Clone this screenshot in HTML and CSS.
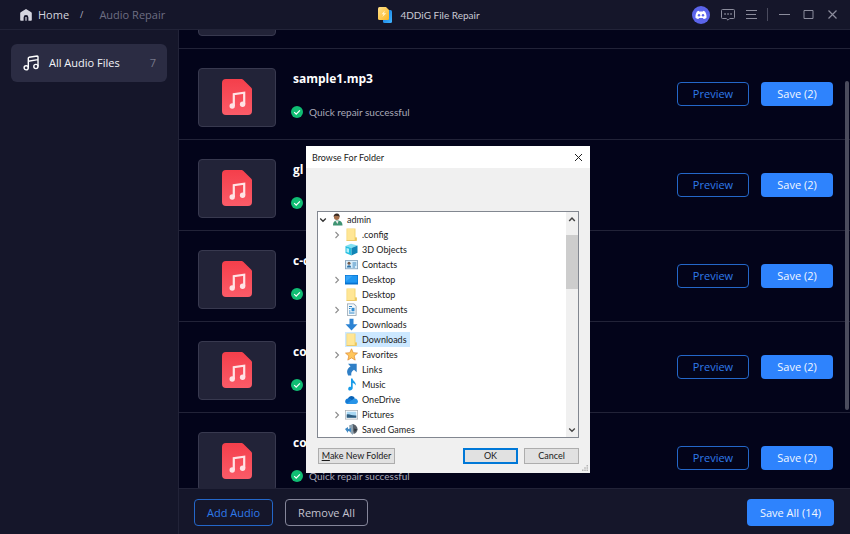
FILE: index.html
```html
<!DOCTYPE html>
<html lang="en">
<head>
<meta charset="utf-8">
<title>4DDiG File Repair</title>
<link rel="stylesheet" href="styles.css">
</head>
<body>
<svg class="sprite" aria-hidden="true">
  <defs>
    <linearGradient id="red" x1="0" y1="0" x2="0" y2="1"><stop offset="0" stop-color="#f43f4b"/><stop offset="1" stop-color="#fb5b68"/></linearGradient>
    <linearGradient id="gold" x1="0" y1="0" x2="1" y2="1"><stop offset="0" stop-color="#ffe08a"/><stop offset="1" stop-color="#fbb723"/></linearGradient>
    <linearGradient id="sky" x1="0" y1="0" x2="1" y2="1"><stop offset="0" stop-color="#0b6fd8"/><stop offset="1" stop-color="#41b5ff"/></linearGradient>
  </defs>
  <symbol id="audio-file" viewBox="0 0 30 36">
    <path fill="url(#red)" d="M4 0h15.500q1 0 1.700.7l8.100 8.100q.7.700.7 1.700V32a4 4 0 0 1-4 4H4a4 4 0 0 1-4-4V4a4 4 0 0 1 4-4z"/>
    <path fill="none" stroke="#ffe3e5" stroke-width="2.200" d="M11.800 27V15.200L22.200 13.700V25"/>
    <circle cx="10.200" cy="27" r="2.700" fill="#ffe3e5"/><circle cx="20.600" cy="25.300" r="2.700" fill="#ffe3e5"/>
  </symbol>
  <symbol id="check" viewBox="0 0 12 12"><circle cx="6" cy="6" r="6" fill="#10bd73"/><path d="M3.200 6.200l2 2 3.700-3.900" fill="none" stroke="#fff" stroke-width="1.200"/></symbol>
  <symbol id="chevron" viewBox="0 0 8 8"><path d="M2.500 1L5.500 4 2.500 7" fill="none" stroke="currentColor" stroke-width="1.100"/></symbol>
  <symbol id="chevron-down" viewBox="0 0 8 8"><path d="M1.200 2.500L4 5.300 6.800 2.500" fill="none" stroke="currentColor" stroke-width="1.300"/></symbol>
  <symbol id="chevron-up" viewBox="0 0 8 8"><path d="M1.200 6L4 3 6.800 6" fill="none" stroke="currentColor" stroke-width="1.500"/></symbol>
  <symbol id="folder" viewBox="0 0 13 13"><path fill="#f4d573" d="M1.500.5h9v9h1.200v3.300H1.500z"/><path fill="#ffe695" d="M2.200 1h7.300v11H2.200z"/><path fill="#e9c35b" d="M10.200 9.500h1.500v3.300H1.500V12h8.700z"/></symbol>
  <symbol id="user" viewBox="0 0 13 13"><path fill="#3f9473" d="M2 12.500c0-4 2-5 4.500-5s5 1 5 5z"/><path fill="#e8e8e8" d="M4.500 8l2 3 1-3z"/><circle cx="5.700" cy="4.300" r="2.700" fill="#a56f4a"/><path fill="#3a2a22" d="M2.700 4C2.300 1.500 4 .3 6 .4s3 1.600 2.500 3.900L7.500 3 4 2.800z"/></symbol>
  <symbol id="cube" viewBox="0 0 13 13"><path fill="#7fe0f3" d="M.5 3L6 .7l6.500 1.800L6.500 5z"/><path fill="#25bfe0" d="M.5 3l6 2v7.500l-6-2.500z"/><path fill="#1185b6" d="M6.500 5l6-2.500v7.300l-6 2.700z"/><path fill="#b4f0fa" d="M1.500 5l2.500.8v4L1.500 9z"/></symbol>
  <symbol id="contact" viewBox="0 0 13 13"><path fill="#7f9fba" d="M0 2.200h13v9H0z"/><path fill="#d9eefb" d="M.8 3h11.400v7.400H.8z"/><circle cx="4" cy="5.300" r="1.500" fill="#775a48"/><path fill="#2b6fa6" d="M1.800 9.600c0-3.300 4.400-3.300 4.400 0z"/><path stroke="#3c86bd" d="M7.500 5h3.800M7.500 7h3.800M7.500 9h2.500"/></symbol>
  <symbol id="desktop" viewBox="0 0 13 13"><path fill="#0872cf" d="M0 2h13v9.500H0z"/><path fill="#1e97f2" d="M.7 2.700h11.600v7H.7z"/><path fill="#38a5f8" d="M.7 2.700h7l-7 6z"/></symbol>
  <symbol id="document" viewBox="0 0 13 13"><path fill="#8d9daa" d="M2 .5h7l2.500 2.500v9.700H2z"/><path fill="#f5fafd" d="M2.700 1.200h6l2 2V12h-8z"/><path stroke="#2d86c9" d="M4 3.500h3M4 5.500h1.500M4 8h1.500M4 10h5.500"/><path fill="#2f8bd0" d="M6.500 4.800h3v3.500h-3z"/></symbol>
  <symbol id="download" viewBox="0 0 13 13"><path fill="#2c83d3" d="M4.500.7h4v5.500h4L6.500 12.500.5 6.200h4z"/></symbol>
  <symbol id="star" viewBox="0 0 13 13"><path fill="#ffc65b" stroke="#dc8a32" stroke-width=".7" d="M6.500.8l1.700 3.900 4.300.4-3.300 2.800 1 4.200-3.700-2.200-3.700 2.200 1-4.200L.5 5.100l4.300-.4z"/></symbol>
  <symbol id="link" viewBox="0 0 13 13"><path fill="#2f7fc6" d="M3 .8h8.700v8.500L9 6.800C6.500 8.200 6 10 6.300 12.500H3.200C1.200 9 2 5.600 5.500 3.600z"/></symbol>
  <symbol id="note" viewBox="0 0 13 13"><path fill="#179be8" d="M6 .5h1.500c.2 2.700 3.800 3 3.200 7-.8-1.700-1.700-2.200-3-2.500v5c0 2.800-4.500 3.400-4.500.9C3.200 9 5 8.600 6 9z"/></symbol>
  <symbol id="cloud" viewBox="0 0 13 13"><path fill="#0962b5" d="M3 5.500C4 2.500 8.300 2 9.800 5.200L6 9H2z"/><path fill="#157bd5" d="M2.700 11C-.7 11-.7 5.800 3 5.400c2-.3 3 1 7.500 4.800z"/><path fill="#2794e8" d="M2 10.600l7.200-5c4.300-.8 5 5.400 1.200 5.400H2.700z"/></symbol>
  <symbol id="picture" viewBox="0 0 13 13"><path fill="#a6adb3" d="M0 2h13v9.500H0z"/><path fill="#fff" d="M.7 2.700h11.600v8H.7z"/><path fill="#a9d8f3" d="M1.700 3.700h9.600v6H1.700z"/><path fill="#2e5c7f" d="M1.700 6.500c3-1 5 1.500 9.600 1v2.200H1.700z"/></symbol>
  <symbol id="games" viewBox="0 0 13 13"><path fill="#58616a" d="M7 1c3 0 5.500 2.500 5.500 5.300 0 2.500-2 4.500-4 4.700z"/><path fill="#8fa4b3" d="M4 2.500L8 1v11l-2.500-2z"/><path fill="#3f89c4" d="M0 6l3-2v2l3-1v4l-3-1v2z"/><path fill="#333b42" d="M9 5.500l3.500 1L9.500 9z"/></symbol>
</svg>

<header class="titlebar">
  <nav class="crumbs" aria-label="Breadcrumb">
    <a class="home" href="#">
      <svg class="home-icon" viewBox="0 0 12 12" aria-hidden="true"><path fill="#d5d5df" d="M6 0l5.300 3.200q.5.400.5 1V11q0 .8-.8.8H8.400V8.400a2.400 2.400 0 0 0-4.800 0v3.400H1q-.8 0-.8-.8V4.200q0-.6.5-1z"/><path d="M6 8v3.800" stroke="#d5d5df" stroke-width="1.200"/></svg>
      Home
    </a>
    <span class="slash">/</span>
    <span class="current">Audio Repair</span>
  </nav>
  <div class="brand">
    <svg class="brand-icon" viewBox="0 0 14 16" aria-hidden="true"><path fill="url(#sky)" d="M5 3h7.500q1.500 0 1.500 1.500v10q0 1.500-1.500 1.500H6.500Q5 16 5 14.500z"/><path fill="url(#gold)" d="M1.500 0H8l3 3v8.500q0 1.500-1.500 1.500h-8Q0 13 0 11.500v-10Q0 0 1.500 0z"/><path fill="#fff3c9" d="M6.800 3.500L3.500 7.200h2L4.300 10l4-3.800H6z"/></svg>
    4DDiG File Repair
  </div>
  <div class="window-tools">
    <button class="tool discord" aria-label="Discord"><svg viewBox="0 0 18 18"><circle cx="9" cy="9" r="9" fill="#5b64ea"/><path fill="#fff" d="M6.700 4.800L5 5.400C3.800 7.200 3.300 9.300 3.500 11.700c1 .8 2 1.200 2.900 1.400l.7-1.200h3.800l.7 1.200c1-.2 2-.6 2.900-1.400.2-2.400-.3-4.500-1.500-6.300l-1.700-.6-.5.800H7.200z"/><circle cx="7" cy="9.300" r="1.200" fill="#5b64ea"/><circle cx="11" cy="9.300" r="1.200" fill="#5b64ea"/></svg></button>
    <button class="tool chat" aria-label="Feedback"><svg viewBox="0 0 14 12"><path fill="none" stroke="currentColor" d="M1.500.5h11q1 0 1 1v7q0 1-1 1H8.700L7 11.200 5.300 9.500H1.500q-1 0-1-1v-7q0-1 1-1z"/><path fill="none" stroke="currentColor" stroke-width="1.500" stroke-dasharray="1.500 1.500" d="M3.300 5h7.500"/></svg></button>
    <button class="tool menu" aria-label="Menu"><svg viewBox="0 0 11 11"><path stroke="currentColor" d="M0 1.500h11M0 5.500h10M0 9.500h11"/></svg></button>
    <span class="divider"></span>
    <button class="tool win" aria-label="Minimize"><svg viewBox="0 0 11 11"><path stroke="currentColor" d="M0 5.500h11"/></svg></button>
    <button class="tool win" aria-label="Maximize"><svg viewBox="0 0 11 11"><path fill="none" stroke="currentColor" d="M1 1.500h9v8H1z"/></svg></button>
    <button class="tool win" aria-label="Close"><svg viewBox="0 0 11 11"><path stroke="currentColor" stroke-width="1.200" d="M1.500 1.500l8 8M9.500 1.500l-8 8"/></svg></button>
  </div>
</header>

<div class="workspace">
  <aside class="sidebar">
    <button class="category">
      <svg class="category-icon" viewBox="0 0 16 16" aria-hidden="true"><g fill="none" stroke="#fff" stroke-width="1.400"><path d="M5.300 12.800V3.300Q5.300 2.500 6 2.300L14.200 1q.8 0 .8.800v9.700M5.300 6.200L15 4.600"/><circle cx="3.200" cy="12.800" r="2.100"/><circle cx="12.900" cy="11.500" r="2.100"/></g></svg>
      <span class="category-name">All Audio Files</span>
      <span class="count">7</span>
    </button>
  </aside>

  <main class="content">
    <div class="viewport">
      <ul class="files">
        <li class="file"><div class="thumb"></div></li>
        <li class="file">
          <div class="thumb"><svg><use href="#audio-file"/></svg></div>
          <div class="info"><h2>sample1.mp3</h2><p><svg><use href="#check"/></svg>Quick repair successful</p></div>
          <button class="btn outline">Preview</button><button class="btn solid">Save (2)</button>
        </li>
        <li class="file">
          <div class="thumb"><svg><use href="#audio-file"/></svg></div>
          <div class="info"><h2>gl</h2><p><svg><use href="#check"/></svg></p></div>
          <button class="btn outline">Preview</button><button class="btn solid">Save (2)</button>
        </li>
        <li class="file">
          <div class="thumb"><svg><use href="#audio-file"/></svg></div>
          <div class="info"><h2>c-c</h2><p><svg><use href="#check"/></svg></p></div>
          <button class="btn outline">Preview</button><button class="btn solid">Save (2)</button>
        </li>
        <li class="file">
          <div class="thumb"><svg><use href="#audio-file"/></svg></div>
          <div class="info"><h2>co</h2><p><svg><use href="#check"/></svg></p></div>
          <button class="btn outline">Preview</button><button class="btn solid">Save (2)</button>
        </li>
        <li class="file">
          <div class="thumb"><svg><use href="#audio-file"/></svg></div>
          <div class="info"><h2>co</h2><p><svg><use href="#check"/></svg>Quick repair successful</p></div>
          <button class="btn outline">Preview</button><button class="btn solid">Save (2)</button>
        </li>
      </ul>
      <div class="scroll-thumb"></div>
    </div>
    <footer class="actions">
      <button class="btn outline large">Add Audio</button>
      <button class="btn neutral large">Remove All</button>
      <button class="btn solid large save-all">Save All (14)</button>
    </footer>
  </main>
</div>

<section class="dialog" role="dialog" aria-labelledby="dialog-title">
  <div class="dialog-title">
    <h1 id="dialog-title">Browse For Folder</h1>
    <button class="dialog-close" aria-label="Close"><svg viewBox="0 0 9 9"><path stroke="#222" d="M1 1l7 7M8 1L1 8"/></svg></button>
  </div>
  <div class="dialog-body">
    <div class="tree-box">
      <ul class="tree" role="tree">
        <li class="node root" role="treeitem"><svg class="arrow open"><use href="#chevron-down"/></svg><svg class="icon"><use href="#user"/></svg><span>admin</span></li>
        <li class="node" role="treeitem"><svg class="arrow"><use href="#chevron"/></svg><svg class="icon"><use href="#folder"/></svg><span>.config</span></li>
        <li class="node" role="treeitem"><i class="arrow"></i><svg class="icon"><use href="#cube"/></svg><span>3D Objects</span></li>
        <li class="node" role="treeitem"><i class="arrow"></i><svg class="icon"><use href="#contact"/></svg><span>Contacts</span></li>
        <li class="node" role="treeitem"><svg class="arrow"><use href="#chevron"/></svg><svg class="icon"><use href="#desktop"/></svg><span>Desktop</span></li>
        <li class="node" role="treeitem"><i class="arrow"></i><svg class="icon"><use href="#folder"/></svg><span>Desktop</span></li>
        <li class="node" role="treeitem"><svg class="arrow"><use href="#chevron"/></svg><svg class="icon"><use href="#document"/></svg><span>Documents</span></li>
        <li class="node" role="treeitem"><i class="arrow"></i><svg class="icon"><use href="#download"/></svg><span>Downloads</span></li>
        <li class="node selected" role="treeitem" aria-selected="true"><i class="arrow"></i><svg class="icon"><use href="#folder"/></svg><span>Downloads</span></li>
        <li class="node" role="treeitem"><svg class="arrow"><use href="#chevron"/></svg><svg class="icon"><use href="#star"/></svg><span>Favorites</span></li>
        <li class="node" role="treeitem"><i class="arrow"></i><svg class="icon"><use href="#link"/></svg><span>Links</span></li>
        <li class="node" role="treeitem"><i class="arrow"></i><svg class="icon"><use href="#note"/></svg><span>Music</span></li>
        <li class="node" role="treeitem"><i class="arrow"></i><svg class="icon"><use href="#cloud"/></svg><span>OneDrive</span></li>
        <li class="node" role="treeitem"><svg class="arrow"><use href="#chevron"/></svg><svg class="icon"><use href="#picture"/></svg><span>Pictures</span></li>
        <li class="node" role="treeitem"><i class="arrow"></i><svg class="icon"><use href="#games"/></svg><span>Saved Games</span></li>
      </ul>
      <div class="tree-scroll">
        <svg><use href="#chevron-up"/></svg>
        <div class="tree-thumb"></div>
        <svg class="down"><use href="#chevron-down"/></svg>
      </div>
    </div>
    <div class="dialog-buttons">
      <button class="sys new-folder"><span><u>M</u>ake New Folder</span></button>
      <button class="sys ok">OK</button>
      <button class="sys">Cancel</button>
    </div>
  </div>
  <svg class="grip" viewBox="0 0 8 8" aria-hidden="true"><path fill="#b5b5b5" d="M6 0h2v2H6zM3 3h2v2H3zM6 3h2v2H6zM0 6h2v2H0zM3 6h2v2H3zM6 6h2v2H6z"/></svg>
</section>
</body>
</html>
```
FILE: styles.css
```css
* { box-sizing: border-box; }

body {
  margin: 0;
  height: 100vh;
  display: flex;
  flex-direction: column;
  overflow: hidden;
  background: #15162a;
  color: #e4e4ec;
  font: 11px/16px "Open Sans", sans-serif;
}

button {
  margin: 0;
  padding: 0;
  border: 0;
  background: none;
  color: inherit;
  font: inherit;
}

svg { display: block; flex: none; }
ul { margin: 0; padding: 0; list-style: none; }
h1, h2, p { margin: 0; }
.sprite { position: absolute; width: 0; height: 0; }

/* Title bar */
.titlebar {
  flex: none;
  height: 30px;
  display: grid;
  grid-template-columns: 1fr auto 1fr;
  align-items: center;
  padding: 0 12px 0 20px;
  border-bottom: 1px solid #222338;
}
.crumbs { display: flex; align-items: center; }
.home { display: flex; align-items: center; gap: 6px; color: #d5d5df; text-decoration: none; }
.home-icon { width: 12px; height: 12px; }
.slash { margin: 0 16px 0 11px; font-size: 9px; color: #b5b5c2; }
.current { color: #6d6e82; }
.brand { display: flex; align-items: center; gap: 8px; font: 10px/16px Lato, sans-serif; color: #c9c9d3; }
.brand-icon { width: 14px; height: 16px; }
.window-tools { display: flex; align-items: center; justify-content: flex-end; color: #8b8c9c; }
.discord svg { width: 18px; height: 18px; }
.chat svg { width: 14px; height: 12px; }
.chat { margin-left: 11px; }
.menu svg, .win svg { width: 11px; height: 11px; }
.menu { margin-left: 11px; }
.divider { width: 1px; height: 13px; margin: 0 0 0 10px; background: #4a4b5e; }
.win { margin-left: 13px; }
.divider + .win { margin-left: 11px; }

/* Sidebar */
.workspace { flex: 1; min-height: 0; display: flex; }
.sidebar { flex: none; width: 179px; padding: 14px 11px; border-right: 1px solid #222338; }
.category {
  width: 100%;
  height: 38px;
  display: flex;
  align-items: center;
  padding: 0 11px 0 12px;
  border-radius: 6px;
  background: #2b2c43;
  text-align: left;
}
.category-icon { width: 16px; height: 16px; margin-right: 10px; }
.category-name { flex: 1; color: #f4f4f8; }
.count { color: #77788a; }

/* File list */
.content { flex: 1; min-width: 0; display: flex; flex-direction: column; }
.viewport { position: relative; flex: 1; min-height: 0; overflow: hidden; background: #03041a; }
.files { margin-top: -72px; }
.file {
  height: 91px;
  display: flex;
  align-items: center;
  padding: 0 17px 0 19px;
  border-bottom: 1px solid #222338;
}
.thumb {
  flex: none;
  width: 78px;
  height: 59px;
  margin-top: 6px;
  display: grid;
  place-items: center;
  border: 1px solid #38394f;
  border-radius: 4px;
  background: #222338;
}
.thumb svg { width: 30px; height: 36px; }
.info { flex: 1; min-width: 0; padding-left: 15px; }
.info h2 { margin-left: 2px; font: bold 12px/18px "Open Sans", sans-serif; color: #fff; }
.info p { display: flex; align-items: center; gap: 6px; height: 14px; margin-top: 17px; font: 10px/14px Lato, sans-serif; color: #a9aab8; }
.info p svg { width: 12px; height: 12px; }

.btn { height: 24px; width: 72px; border: 1px solid transparent; border-radius: 4px; white-space: nowrap; }
.btn.outline { border-color: #2467c9; color: #2f7bea; }
.btn.solid { background: #2e83fd; color: #f2f7ff; }
.btn.neutral { border-color: #85869a; color: #c3c3cf; }
.btn + .btn { margin-left: 12px; }
.btn.large { width: auto; height: 27px; padding: 0 12px; }
.scroll-thumb { position: absolute; top: 51px; right: 1px; width: 4px; height: 329px; border-radius: 2px; background: #4b4c5d; }

.actions {
  flex: none;
  height: 46px;
  display: flex;
  align-items: center;
  padding: 2px 16px 0 15px;
  border-top: 1px solid #222338;
}
.actions .save-all { margin-left: auto; }

/* Folder dialog */
.dialog {
  position: absolute;
  left: 306px;
  top: 146px;
  width: 284px;
  background: #f0f0f0;
  color: #1a1a1a;
  font: 9px/15px Lato, sans-serif;
}
.dialog-title { height: 22px; display: flex; align-items: center; justify-content: space-between; padding: 0 7px 0 6px; background: #fff; }
.dialog-title h1 { font: inherit; }
.dialog-close svg { width: 9px; height: 9px; }
.dialog-body { padding: 43px 11px 9px; }
.tree-box { display: flex; border: 1px solid #828790; background: #fff; }
.tree { flex: 1; }
.node { display: flex; align-items: center; height: 15px; padding-left: 15px; }
.node.root { padding-left: 1px; }
.arrow { width: 8px; height: 8px; margin-right: 4px; color: #8c8c8c; }
.arrow.open { color: #333; }
.icon { width: 13px; height: 13px; margin-right: 1px; }
.node span { padding: 0 3px; }
.root .icon { margin-right: 0; }
.selected .icon, .selected span { background: #cce8ff; }
.selected .icon { margin: 0; height: 15px; }
.selected span { padding-left: 4px; }
.tree-scroll { width: 12px; display: flex; flex-direction: column; align-items: center; padding: 3px 0; background: #f0f0f0; color: #444; }
.tree-scroll svg { width: 8px; height: 8px; }
.tree-thumb { width: 12px; height: 54px; margin-top: 12px; background: #cdcdcd; }
.tree-scroll .down { margin-top: auto; }
.dialog-buttons { display: flex; gap: 6px; padding: 10px 0 0 1px; }
.sys { width: 55px; height: 16px; border: 1px solid #adadad; background: #e1e1e1; line-height: 14px; }
.new-folder { width: 77px; margin-right: auto; }
.sys.ok { border: 2px solid #0078d7; line-height: 12px; }
.grip { position: absolute; right: 2px; bottom: 2px; width: 6px; height: 6px; }
```
